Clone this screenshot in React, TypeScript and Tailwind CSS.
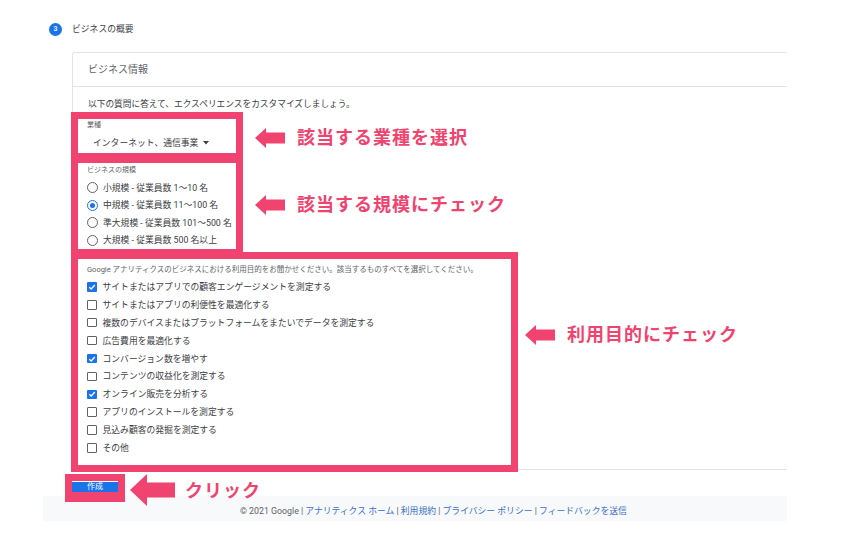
import React from "react";

const purposes: { label: string; checked: boolean }[] = [
  { label: "サイトまたはアプリでの顧客エンゲージメントを測定する", checked: true },
  { label: "サイトまたはアプリの利便性を最適化する", checked: false },
  { label: "複数のデバイスまたはプラットフォームをまたいでデータを測定する", checked: false },
  { label: "広告費用を最適化する", checked: false },
  { label: "コンバージョン数を増やす", checked: true },
  { label: "コンテンツの収益化を測定する", checked: false },
  { label: "オンライン販売を分析する", checked: true },
  { label: "アプリのインストールを測定する", checked: false },
  { label: "見込み顧客の発掘を測定する", checked: false },
  { label: "その他", checked: false },
];

const sizes = [
  { label: "小規模 - 従業員数 1〜10 名", checked: false },
  { label: "中規模 - 従業員数 11〜100 名", checked: true },
  { label: "準大規模 - 従業員数 101〜500 名", checked: false },
  { label: "大規模 - 従業員数 500 名以上", checked: false },
];

function Arrow({ big }: { big?: boolean }) {
  if (big) {
    return (
      <svg width="45" height="32" viewBox="0 0 45 32" className="shrink-0">
        <polygon points="0,16 17,0 17,8.5 45,8.5 45,23.5 17,23.5 17,32" fill="#f0436f" />
      </svg>
    );
  }
  return (
    <svg width="30" height="20" viewBox="0 0 30 20" className="shrink-0">
      <polygon points="0,10 11,0 11,4.5 30,4.5 30,15.5 11,15.5 11,20" fill="#f0436f" />
    </svg>
  );
}

function Note({ text, className }: { text: string; className: string }) {
  return (
    <div className={`flex h-[22px] items-center ${className}`}>
      <Arrow />
      <span className="ml-[12px] text-[18px] font-bold leading-[22px] tracking-[1px] text-[#f0436f]">
        {text}
      </span>
    </div>
  );
}

function Radio({ checked, label }: { checked: boolean; label: string }) {
  return (
    <div className="flex h-[17.5px] items-center">
      <span
        className={`flex h-[11px] w-[11px] items-center justify-center rounded-full border-[1.5px] ${
          checked ? "border-[#1a73e8]" : "border-[#5f6368]"
        }`}
      >
        {checked && <span className="h-[5px] w-[5px] rounded-full bg-[#1a73e8]" />}
      </span>
      <span className="ml-[5px] text-[8.8px] leading-[12px] text-[#3c4043]">{label}</span>
    </div>
  );
}

function Checkbox({ checked, label }: { checked: boolean; label: string }) {
  return (
    <div className="flex h-[17.9px] items-center">
      {checked ? (
        <span className="flex h-[9.5px] w-[9.5px] items-center justify-center rounded-[1px] bg-[#1a73e8]">
          <svg width="8" height="8" viewBox="0 0 8 8">
            <polyline points="1.3,4.2 3.2,6 6.8,2" fill="none" stroke="#fff" strokeWidth="1.3" />
          </svg>
        </span>
      ) : (
        <span className="h-[9.5px] w-[9.5px] rounded-[1px] border-[1.5px] border-[#5f6368]" />
      )}
      <span className="ml-[6px] text-[8.8px] leading-[12px] text-[#3c4043]">{label}</span>
    </div>
  );
}

export default function App() {
  return (
    <div className="relative h-[540px] w-[867px] overflow-hidden bg-white font-['Roboto','Noto_Sans_CJK_JP',sans-serif]">
      <div className="ml-[43px] w-[744px]">
        {/* step header */}
        <div className="flex items-center pl-[6px] pt-[23px]">
          <span className="flex h-[13px] w-[13px] items-center justify-center rounded-full bg-[#1a73e8] text-[7px] font-medium text-white">
            3
          </span>
          <span className="ml-[10px] text-[8.8px] leading-[13px] text-[#3c4043]">ビジネスの概要</span>
        </div>

        {/* card */}
        <div className="ml-[29px] mt-[16px] w-[715px] rounded-tl-[3px] border-b border-l border-t border-[#e2e3e5]">
          <div className="flex h-[34px] items-center border-b border-[#e2e3e5] pl-[15px] text-[10px] text-[#5f6368]">
            ビジネス情報
          </div>
          <div className="pl-[15px]">
            <div className="pt-[11px] text-[8.7px] leading-[12px] text-[#3c4043]">
              以下の質問に答えて、エクスペリエンスをカスタマイズしましょう。
            </div>

            {/* industry */}
            <div className="ml-[-17px] mt-[2px] flex items-start">
              <div className="w-[172px] border-[7px] border-[#f0436f] bg-white pb-[4px] pl-[9px] pt-[1px]">
                <div className="text-[7px] leading-[10px] text-[#5f6368]">業種</div>
                <div className="ml-[6px] mt-[7px] flex items-center text-[8.8px] leading-[12px] text-[#3c4043]">
                  インターネット、通信事業
                  <svg width="6" height="4" viewBox="0 0 6 4" className="ml-[5px]">
                    <polygon points="0,0 6,0 3,3.5" fill="#3c4043" />
                  </svg>
                </div>
              </div>
              <Note text="該当する業種を選択" className="ml-[12px] mt-[15px]" />
            </div>

            {/* size */}
            <div className="relative ml-[-17px] mt-[-4px] flex items-start">
              <div className="w-[172px] border-[7px] border-[#f0436f] bg-white pl-[9px] pt-[2px]">
                <div className="text-[7px] leading-[10px] text-[#5f6368]">ビジネスの規模</div>
                <div className="mt-[4px]">
                  {sizes.map((s) => (
                    <Radio key={s.label} checked={s.checked} label={s.label} />
                  ))}
                </div>
              </div>
              <Note text="該当する規模にチェック" className="ml-[12px] mt-[38px]" />
            </div>

            {/* purposes */}
            <div className="relative mb-[-3px] ml-[-17px] mt-[-4px] flex items-start">
              <div className="w-[447px] border-[7px] border-[#f0436f] bg-white pb-[8px] pl-[9px] pt-[6px]">
                <div className="text-[7.5px] leading-[10px] text-[#5f6368]">
                  Google アナリティクスのビジネスにおける利用目的をお聞かせください。該当するものすべてを選択してください。
                </div>
                <div className="mt-[3px]">
                  {purposes.map((p) => (
                    <Checkbox key={p.label} checked={p.checked} label={p.label} />
                  ))}
                </div>
              </div>
              <Note text="利用目的にチェック" className="ml-[7px] mt-[72px]" />
            </div>
          </div>
        </div>

        {/* create button */}
        <div className="relative z-10 ml-[22px] mt-[4px] flex h-[22px] items-start">
          <div className="w-[60px] border-[7px] border-b-[10px] border-[#f0436f] bg-white pt-[1px]">
            <div className="flex h-[10px] items-center justify-center bg-[#1a73e8] text-[8px] leading-[10px] text-white">
              作成
            </div>
          </div>
          <div className="ml-[5px] shrink-0">
            <Arrow big />
          </div>
          <span className="ml-[10px] mt-[5px] text-[18px] font-bold leading-[24px] tracking-[1px] text-[#f0436f]">
            クリック
          </span>
        </div>

        {/* footer */}
        <div className="bg-[#f8f9fa] pb-[4px] pl-[197px] pt-[9px] text-[8.8px] leading-[12px] text-[#5f6368]">
          © 2021 Google | <span className="text-[#3b6fc6]">アナリティクス ホーム</span> |{" "}
          <span className="text-[#3b6fc6]">利用規約</span> |{" "}
          <span className="text-[#3b6fc6]">プライバシー ポリシー</span> |{" "}
          <span className="text-[#3b6fc6]">フィードバックを送信</span>
        </div>
      </div>
    </div>
  );
}
